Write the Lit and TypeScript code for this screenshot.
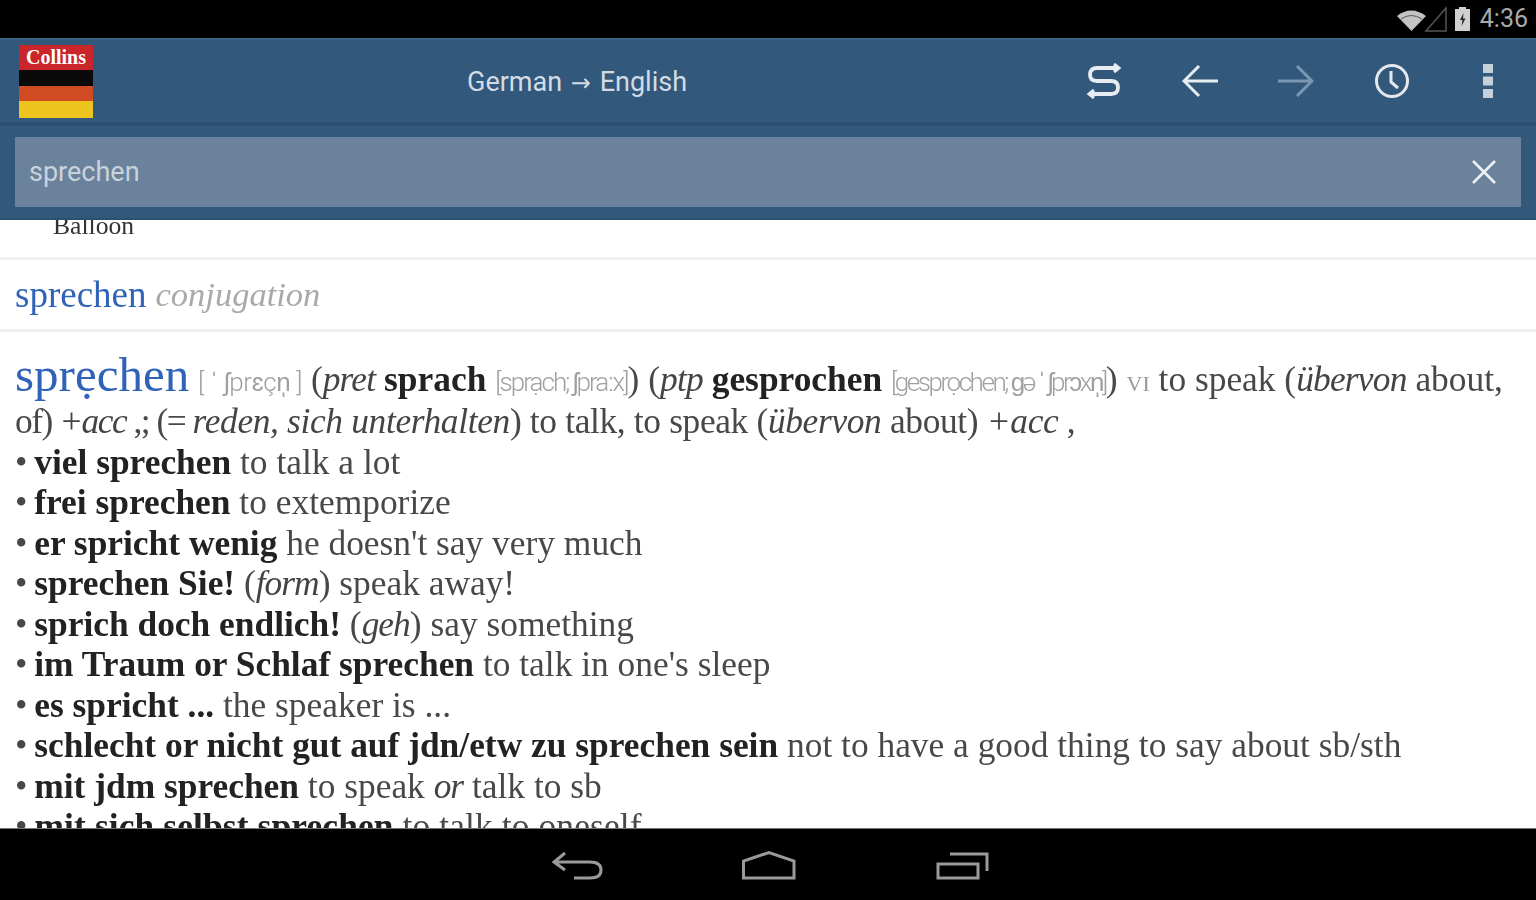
import { LitElement, html, css } from "lit";
import { customElement } from "lit/decorators.js";

@customElement("app-root")
export class AppRoot extends LitElement {
  static styles = css`
    :host { display: block; width: 1536px; height: 900px; overflow: hidden; background: #fff; }
    .page { width: 1536px; height: 900px; display: flex; flex-direction: column; filter: blur(0.7px); }
    .status { height: 38px; flex: none; background: #000; display: flex; align-items: center; justify-content: flex-end; padding-right: 8px; box-sizing: border-box; }
    .status svg { display: block; }
    .time { font: 400 25px/30px Roboto, sans-serif; color: #a9a9a9; margin-left: 8px; }
    .nav { height: 71px; flex: none; background: #000; display: flex; justify-content: center; align-items: center; padding: 3px 0 0 8px; box-sizing: border-box; }
    .toolbar { height: 84px; flex: none; background: #32587c; display: flex; align-items: center; border-top: 2px solid #3a6085; box-sizing: border-box; }
    .logo { width: 74px; height: 73px; margin-left: 19px; display: flex; flex-direction: column; flex: none; }
    .logo .brand { height: 25px; background: #c9252b; color: #fff; font: 700 20px/25px "Liberation Serif", serif; text-align: center; }
    .logo .b { height: 16px; background: #0a0a0a; }
    .logo .r { height: 15px; background: #d14b22; }
    .logo .y { height: 17px; background: #eec51f; }
    .title { margin-left: 374px; padding-top: 2px; font: 400 27px/36px Roboto, sans-serif; color: #d3dce4; flex: 1; white-space: nowrap; }
    .title .arrow { font: 400 24px/36px "DejaVu Sans", sans-serif; margin: 0 2px; }
    .actions { display: flex; flex: none; }
    .actions div { width: 96px; height: 48px; display: flex; align-items: center; justify-content: center; }
    .search { height: 98px; flex: none; background: #32587c; border-top: 4px solid #2c4e70; box-sizing: border-box; padding: 11px 15px 13px; border-bottom: 2px solid #2c4e70; }
    .field { height: 70px; background: #6a829b; display: flex; align-items: center; justify-content: space-between; padding: 0 24px 0 14px; }
    .field span { font: 400 27px/36px Roboto, sans-serif; color: #c9d3dd; }
    .content { flex: 1; min-height: 0; overflow: hidden; border-bottom: 1px solid #777; font-family: "Liberation Serif", serif; color: #484848; }
    .balloon { height: 37px; overflow: hidden; display: flex; flex-direction: column; justify-content: flex-end; padding: 0 0 18px 53px; box-sizing: border-box; font-size: 25.6px; line-height: 26px; color: #333; flex: none; }
    .sep { height: 3px; background: #f1f1f1; }
    .conj { height: 69px; display: flex; align-items: center; padding-left: 15px; border-bottom: 3px solid #efefef; }
    .conj b { font-weight: 400; font-size: 37px; color: #2f62b8; }
    .conj i { font-size: 34.5px; color: #a9a9a9; margin-left: 9px; }
    .entry { padding: 19px 15px 0; }
    .line { font-size: 35.4px; line-height: 40.5px; white-space: nowrap; }
    .head { line-height: 47px; height: 50px; }
    .head i { letter-spacing: -0.8px; }
    .hw { font-size: 49px; color: #2f62b8; }
    .ph { font: 300 26px/1 Roboto, sans-serif; color: #a0a0a0; letter-spacing: -0.4px; }
    .ph2 { letter-spacing: -1.95px; }
    .ph3 { letter-spacing: -2.45px; }
    .tight { letter-spacing: -1.5px; }
    .snug { letter-spacing: -0.35px; }
    .line b { color: #222; }
    .line i { color: #444; }
    .row i { letter-spacing: -1px; }
    .wide { letter-spacing: 0.12px; }
    .bu { margin-right: -2px; }
    .pos { font-size: 22px; color: #999; }
  `;

  render() {
    const rows: Array<[string, unknown]> = [
      ["viel sprechen", html` to talk a lot`],
      ["frei sprechen", html` to extemporize`],
      ["er spricht wenig", html` he doesn't say very much`],
      ["sprechen Sie!", html` (<i>form</i>) speak away!`],
      ["sprich doch endlich!", html` (<i>geh</i>) say something`],
      ["im Traum or Schlaf sprechen", html` to talk in one's sleep`],
      ["es spricht ...", html` the speaker is ...`],
      ["schlecht or nicht gut auf jdn/etw zu sprechen sein", html` not to have a good thing to say about sb/sth`],
      ["mit jdm sprechen", html` to speak <i>or</i> talk to sb`],
      ["mit sich selbst sprechen", html` to talk to oneself`],
    ];
    return html`<div class="page">
      <div class="status">
        <svg width="52" height="28" viewBox="0 0 52 28">
          <path d="M1 11 Q15 0 30 11 L15.5 26 Z" fill="#c4c4c4"/>
          <path d="M5 14 Q15 7 26 14" stroke="#555" stroke-width="1" fill="none"/>
          <path d="M30 26 L50 3 V26 Z" fill="none" stroke="#555" stroke-width="1.5"/>
        </svg>
        <svg width="18" height="26" viewBox="0 0 18 26" style="margin-left:6px">
          <path d="M5 1 H12 V3 H16 V25 H1 V3 H5 Z" fill="#d0d0d0"/>
          <path d="M9.5 7 L6 14 H8.5 L7.5 20 L11.5 12.5 H9 Z" fill="#222"/>
        </svg>
        <span class="time">4:36</span>
      </div>
      <div class="toolbar">
        <div class="logo"><div class="brand">Collins</div><div class="b"></div><div class="r"></div><div class="y"></div></div>
        <div class="title">German <span class="arrow">→</span> English</div>
        <div class="actions">
          <div><svg width="36" height="36" viewBox="0 0 36 36" fill="none" stroke="#e8edf1" stroke-width="3.8">
            <path d="M31 5 H11 Q4 5 4 11.5 Q4 18 11 18 H25 Q32 18 32 24.5 Q32 31 25 31 H5"/>
            <path d="M28 1 L33 5 L28 9 M8 27 L3 31 L8 35" stroke-width="3"/></svg></div>
          <div><svg width="36" height="36" viewBox="0 0 36 36" fill="none" stroke="#e8edf1" stroke-width="3">
            <path d="M36 18 H2 M17 3 L2 18 L17 33"/></svg></div>
          <div><svg width="36" height="36" viewBox="0 0 36 36" fill="none" stroke="#7b98b3" stroke-width="3">
            <path d="M0 18 H34 M19 3 L34 18 L19 33"/></svg></div>
          <div><svg width="36" height="36" viewBox="0 0 36 36" fill="none" stroke="#e3e9ee" stroke-width="3">
            <circle cx="18" cy="18" r="15.5"/><path d="M17 8 V19 L24 25"/></svg></div>
          <div><svg width="12" height="36" viewBox="0 0 12 36" fill="#c5d0da">
            <rect x="1" y="1" width="10" height="9"/><rect x="1" y="13.5" width="10" height="9"/><rect x="1" y="26" width="10" height="9"/></svg></div>
        </div>
      </div>
      <div class="search">
        <div class="field"><span>sprechen</span>
          <svg width="26" height="26" viewBox="0 0 26 26" stroke="#eef1f4" stroke-width="2.6" fill="none"><path d="M2 2 L24 24 M24 2 L2 24"/></svg>
        </div>
      </div>
      <div class="content">
        <div class="balloon">Balloon</div>
        <div class="sep"></div>
        <div class="conj"><b>sprechen</b><i>conjugation</i></div>
        <div class="entry">
          <div class="line head"><span class="hw">sprẹchen</span> <span class="ph">[ ˈ ʃprɛçn̩ ]</span> (<i>pret</i> <b>sprach</b> <span class="ph ph2">[sprạch; ʃpraːx]</span>) (<i>ptp</i> <b>gesprochen</b> <span class="ph ph3">[gesprọchen; ɡə ˈ ʃprɔxn̩]</span>) <span class="pos">VI</span> to speak (<i>übervon</i> about,</div>
          <div class="line"><span class="tight">of) <i>+acc</i> ,; (= </span><span class="snug"><i>reden, sich unterhalten</i>) to talk, to speak (<i>übervon</i> about) <i>+acc</i> ,</span></div>
          ${rows.map(([a, b], i) => html`<div class="line row ${i === rows.length - 1 ? "wide" : ""}"><span class="bu">• </span><b>${a}</b>${b}</div>`)}
        </div>
      </div>
      <div class="nav">
        <svg width="440" height="32" viewBox="0 0 440 32" fill="none" stroke="#9a9a9a" stroke-width="3">
          <path d="M13 3 L2 12 L13 20 M3 12 H38 Q49 12 49 20 Q49 28 38 28 H22"/>
          <path d="M191.5 28 V11 L217 2.5 L242 11 V28 Z"/>
          <path d="M386 28 V14 H426 V28 Z M398 4 H435 V21"/>
        </svg>
      </div>
    </div>`;
  }
}
